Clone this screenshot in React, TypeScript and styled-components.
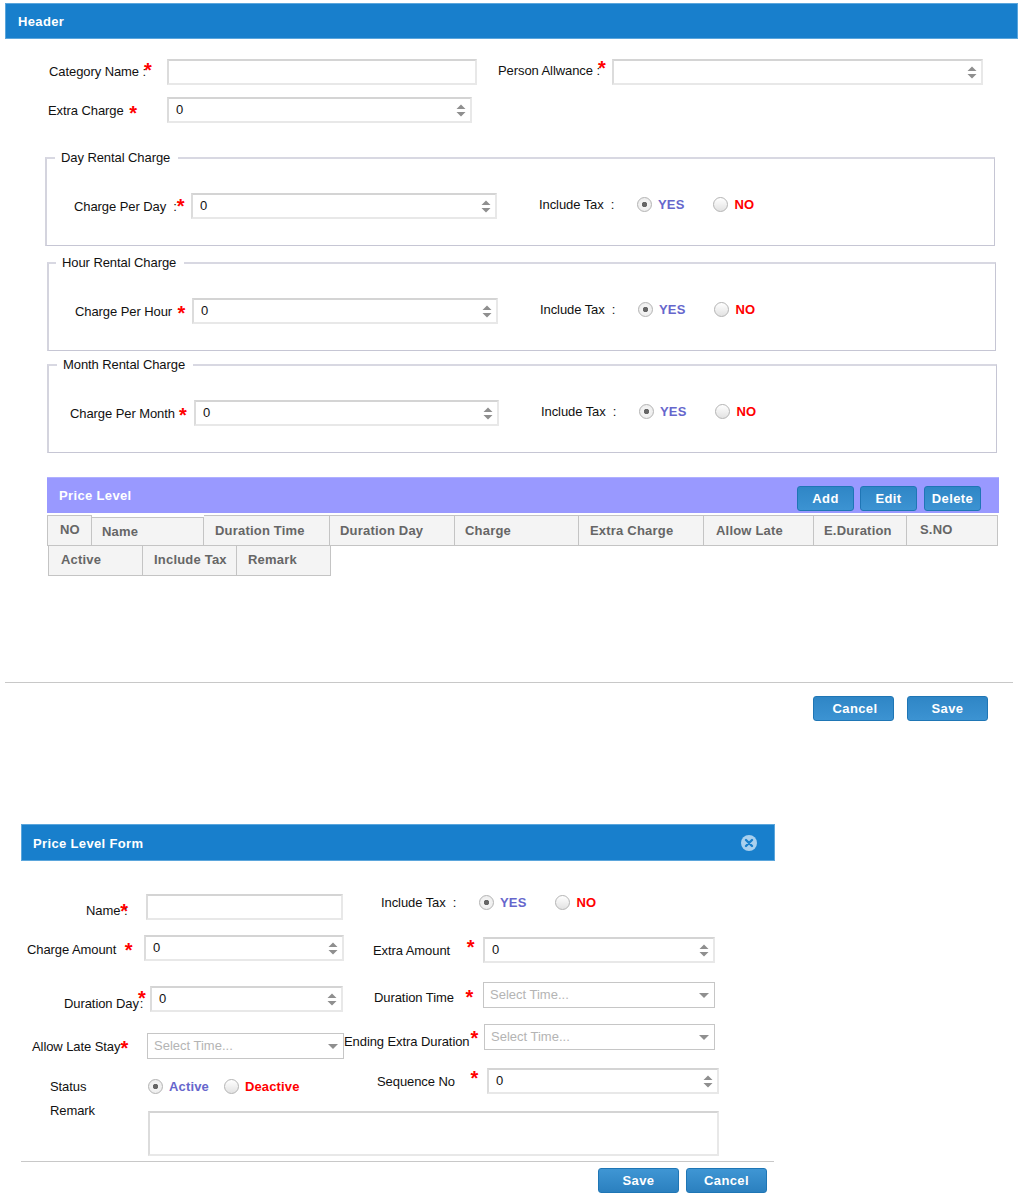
import React from "react";
import styled, { createGlobalStyle } from "styled-components";

const GlobalStyle = createGlobalStyle`
  html, body {
    margin: 0;
    padding: 0;
    background: #ffffff;
    font-family: "Liberation Sans", Arial, sans-serif;
    font-size: 13px;
    color: #111111;
  }
`;

const Page = styled.div`
  width: 1024px;
  height: 1200px;
  padding-top: 3px;
  box-sizing: border-box;
  overflow: hidden;
`;

const TopPanel = styled.section`
  margin-left: 5px;
  width: 1013px;
`;

const FormPanel = styled.section`
  margin: 103px 0 0 21px;
  width: 754px;
`;

const PanelHeader = styled.div<{ $pad: number; $h: number }>`
  height: ${(p) => p.$h}px;
  box-sizing: border-box;
  display: flex;
  align-items: center;
  justify-content: space-between;
  padding: ${(p) => p.$h - 36}px 17px 0 ${(p) => p.$pad}px;
  background: #187fcc;
  border: 1px solid #5ba6dc;
  color: #ffffff;
  font-size: 13px;
  font-weight: bold;
  letter-spacing: 0.35px;
`;

const Row = styled.div<{ $top?: number }>`
  display: flex;
  align-items: flex-start;
  margin-top: ${(p) => p.$top ?? 0}px;
`;

const Label = styled.label<{ $left?: number; $w: number; $y?: number }>`
  flex: none;
  display: block;
  box-sizing: border-box;
  margin-left: ${(p) => p.$left ?? 0}px;
  width: ${(p) => p.$w}px;
  padding-top: ${(p) => p.$y ?? 5}px;
  line-height: 16px;
  font-size: 13px;
  letter-spacing: -0.08px;
  white-space: pre;
`;

const Star = styled.span<{ $gap?: number; $up?: number; $over?: number }>`
  color: #ff0000;
  font-weight: bold;
  font-size: 20px;
  line-height: 0;
  margin-left: ${(p) => p.$gap ?? 0}px;
  margin-right: ${(p) => -(p.$over ?? 0)}px;
  vertical-align: ${(p) => p.$up ?? 0}px;
`;

const Box = styled.div<{ $w: number; $left?: number }>`
  flex: none;
  display: flex;
  align-items: center;
  box-sizing: border-box;
  margin-left: ${(p) => p.$left ?? 0}px;
  width: ${(p) => p.$w}px;
  height: 26px;
  padding: 0 4px 0 7px;
  background: #ffffff;
  border: 2px solid #e8e8e8;
  border-top-color: #d4d4d4;
  border-left-color: #dcdcdc;
`;

const SelectBox = styled(Box)`
  border: 1px solid #c6c6c6;
  padding: 0 5px 0 6px;
`;

const Field = styled.input`
  flex: 1;
  min-width: 0;
  border: 0;
  padding: 0;
  margin-top: -1px;
  outline: none;
  background: transparent;
  font: 13px "Liberation Sans", Arial, sans-serif;
  color: #111111;

  &::placeholder {
    color: #b4b4b4;
    opacity: 1;
  }
`;

const RemarkArea = styled.textarea`
  flex: none;
  box-sizing: border-box;
  width: 571px;
  height: 45px;
  margin-top: 8px;
  padding: 4px;
  resize: none;
  background: #ffffff;
  border: 2px solid #e8e8e8;
  border-top-color: #d4d4d4;
  border-left-color: #dcdcdc;
  outline: none;
`;

const Spin = () => (
  <svg width="10" height="13" viewBox="0 0 10 13" style={{ flex: "none" }}>
    <path d="M5 0.5 L9.5 5 L0.5 5 Z M0.5 8 L9.5 8 L5 12.5 Z" fill="#8f8f8f" />
  </svg>
);

const Caret = () => (
  <svg width="10" height="5" viewBox="0 0 10 5" style={{ flex: "none" }}>
    <path d="M0 0 L10 0 L5 5 Z" fill="#8f8f8f" />
  </svg>
);

const NumberField = ({ w, value = "0", left }: { w: number; value?: string; left?: number }) => (
  <Box $w={w} $left={left}>
    <Field defaultValue={value} />
    <Spin />
  </Box>
);

const TimeSelect = ({ w }: { w: number }) => (
  <SelectBox $w={w}>
    <Field placeholder="Select Time..." />
    <Caret />
  </SelectBox>
);

const Radios = styled.div<{ $gap: number; $y: number }>`
  display: flex;
  align-items: center;
  height: 16px;
  margin-top: ${(p) => p.$y}px;
  gap: ${(p) => p.$gap}px;
`;

const RadioItem = styled.div`
  display: flex;
  align-items: center;
  gap: 6px;
  font-weight: bold;
  font-size: 13px;
  letter-spacing: 0.15px;
`;

const RadioDot = styled.span<{ $on?: boolean }>`
  flex: none;
  width: 15px;
  height: 15px;
  box-sizing: border-box;
  border-radius: 50%;
  border: 1px solid #b4b4b4;
  background: ${(p) =>
    p.$on
      ? "radial-gradient(circle, #666666 0, #666666 2.4px, #f4f4f4 3px, #e8e8e8 100%)"
      : "linear-gradient(#ffffff, #e2e2e2)"};
`;

const RadioText = styled.span<{ $tone: "yes" | "no" }>`
  color: ${(p) => (p.$tone === "yes" ? "#6666cc" : "#ff0000")};
`;

const YesNo = ({
  yes = "YES",
  no = "NO",
  gap = 29,
  y = 0,
}: {
  yes?: string;
  no?: string;
  gap?: number;
  y?: number;
}) => (
  <Radios $gap={gap} $y={y}>
    <RadioItem>
      <RadioDot $on />
      <RadioText $tone="yes">{yes}</RadioText>
    </RadioItem>
    <RadioItem>
      <RadioDot />
      <RadioText $tone="no">{no}</RadioText>
    </RadioItem>
  </Radios>
);

const ChargeSet = styled.fieldset<{ $left: number; $w: number; $top: number }>`
  display: block;
  box-sizing: border-box;
  margin: ${(p) => p.$top}px 0 0 ${(p) => p.$left}px;
  width: ${(p) => p.$w}px;
  height: 96px;
  min-width: 0;
  padding: 28px 0 0 0;
  border: 1px solid #c6c6d4;
  border-top: 2px solid #d8d8e2;
  border-left: 2px solid #d4d4de;
`;

const ChargeLegend = styled.legend<{ $left: number }>`
  margin-left: ${(p) => p.$left}px;
  padding: 0 8px 0 6px;
  line-height: 15px;
  font-size: 13px;
  letter-spacing: -0.08px;
`;

const LevelBar = styled.div`
  margin: 24px 0 0 42px;
  width: 952px;
  height: 36px;
  box-sizing: border-box;
  display: flex;
  align-items: flex-start;
  justify-content: space-between;
  padding: 8px 18px 0 12px;
  background: #9999ff;
  border-top: 1px solid #b0b0ff;
  color: #ffffff;
  font-weight: bold;
  font-size: 13px;
  letter-spacing: 0.35px;
`;

const LevelTitle = styled.span`
  margin-top: 1px;
  line-height: 17px;
`;

const Buttons = styled.div`
  display: flex;
  gap: 6px;
`;

const Button = styled.button<{ $w: number; $left?: number; $nudge?: number; $flip?: boolean }>`
  width: ${(p) => p.$w}px;
  height: 25px;
  margin-left: ${(p) => p.$left ?? 0}px;
  padding: 0 0 0 ${(p) => p.$nudge ?? 0}px;
  border: 1px solid #1f76b5;
  border-radius: 3px;
  background: ${(p) =>
    p.$flip ? "linear-gradient(#3f96d4, #2b80bf)" : "linear-gradient(#2f86c6, #3c93d2)"};
  color: #ffffff;
  font: bold 13px "Liberation Sans", Arial, sans-serif;
  letter-spacing: 0.4px;
`;

const HeadRow = styled.div<{ $top: number; $left: number }>`
  display: flex;
  margin: ${(p) => p.$top}px 0 0 ${(p) => p.$left}px;
`;

const HeadCell = styled.div<{ $w: number; $pad: number; $y?: number; $drop?: number }>`
  flex: none;
  box-sizing: border-box;
  width: ${(p) => p.$w}px;
  height: ${(p) => 31 - (p.$drop ?? 0)}px;
  margin-top: ${(p) => p.$drop ?? 0}px;
  padding: ${(p) => p.$y ?? 6}px 0 0 ${(p) => p.$pad}px;
  background: #f4f4f4;
  border: 1px solid #c4c4c4;
  border-left-width: 0;
  color: #666666;
  font-weight: bold;
  font-size: 13px;
  line-height: 17px;
  letter-spacing: 0.2px;
  white-space: nowrap;

  &:first-child {
    border-left-width: 1px;
  }
`;

const Rule = styled.hr<{ $top: number; $w: number }>`
  margin: ${(p) => p.$top}px 0 0 0;
  width: ${(p) => p.$w}px;
  height: 1px;
  border: 0;
  background: #c8c8c8;
`;

const FooterBar = styled.div<{ $top: number; $right: number; $gap: number }>`
  display: flex;
  justify-content: flex-end;
  gap: ${(p) => p.$gap}px;
  margin-top: ${(p) => p.$top}px;
  padding-right: ${(p) => p.$right}px;
`;

const FormColumns = styled.div`
  display: flex;
  align-items: flex-start;
`;

const LeftColumn = styled.div`
  flex: none;
  width: 323px;
`;

const RightColumn = styled.div`
  flex: none;
  width: 431px;
`;

const CloseIcon = () => (
  <svg width="16" height="16" viewBox="0 0 16 16">
    <circle cx="8" cy="8" r="8" fill="#a9d0ee" />
    <path d="M5 5 L11 11 M11 5 L5 11" stroke="#187fcc" strokeWidth="2.4" strokeLinecap="round" />
  </svg>
);

const topCells = [
  { t: "NO", w: 45, pad: 12, y: 5 },
  { t: "Name", w: 112, pad: 10, y: 5, drop: 2 },
  { t: "Duration Time", w: 126, pad: 11 },
  { t: "Duration Day", w: 125, pad: 10 },
  { t: "Charge", w: 124, pad: 10 },
  { t: "Extra Charge", w: 125, pad: 11 },
  { t: "Allow Late", w: 110, pad: 12 },
  { t: "E.Duration", w: 93, pad: 10 },
  { t: "S.NO", w: 91, pad: 13, y: 5 },
];

const lowerCells = [
  { t: "Active", w: 95, pad: 12 },
  { t: "Include Tax", w: 94, pad: 11 },
  { t: "Remark", w: 94, pad: 11 },
];

export default function App() {
  return (
    <Page>
      <GlobalStyle />
      <TopPanel>
        <PanelHeader $pad={12} $h={36}>Header</PanelHeader>

        <Row $top={20}>
          <Label $left={44} $w={118} $y={5}>
            Category Name :<Star $gap={-2} $up={-1}>*</Star>
          </Label>
          <Box $w={310} />
          <Label $left={21} $w={114} $y={4}>
            Person Allwance :<Star $gap={-2} $up={0}>*</Star>
          </Label>
          <NumberField w={371} value="" />
        </Row>
        <Row $top={12}>
          <Label $left={43} $w={119} $y={6}>
            Extra Charge <Star $gap={2} $up={-5}>*</Star>
          </Label>
          <NumberField w={305} />
        </Row>

        <ChargeSet $left={40} $w={950} $top={27}>
          <ChargeLegend $left={8}>Day Rental Charge</ChargeLegend>
          <Row>
            <Label $left={27} $w={117} $y={6}>
              Charge Per Day  :<Star $gap={0} $up={-2}>*</Star>
            </Label>
            <NumberField w={306} />
            <Label $left={42} $w={98} $y={4}>Include Tax  :</Label>
            <YesNo y={3} />
          </Row>
        </ChargeSet>

        <ChargeSet $left={42} $w={949} $top={9}>
          <ChargeLegend $left={7}>Hour Rental Charge</ChargeLegend>
          <Row>
            <Label $left={26} $w={117} $y={6}>
              Charge Per Hour <Star $gap={2} $up={-4}>*</Star>
            </Label>
            <NumberField w={306} />
            <Label $left={42} $w={98} $y={4}>Include Tax  :</Label>
            <YesNo y={3} />
          </Row>
        </ChargeSet>

        <ChargeSet $left={42} $w={950} $top={6}>
          <ChargeLegend $left={8}>Month Rental Charge</ChargeLegend>
          <Row>
            <Label $left={21} $w={124} $y={6}>
              Charge Per Month<Star $gap={4} $up={-4}>*</Star>
            </Label>
            <NumberField w={305} />
            <Label $left={42} $w={98} $y={4}>Include Tax  :</Label>
            <YesNo y={3} />
          </Row>
        </ChargeSet>

        <LevelBar>
          <LevelTitle>Price Level</LevelTitle>
          <Buttons>
            <Button $w={57}>Add</Button>
            <Button $w={57}>Edit</Button>
            <Button $w={57} $left={1}>Delete</Button>
          </Buttons>
        </LevelBar>
        <HeadRow $top={2} $left={42}>
          {topCells.map((c) => (
            <HeadCell key={c.t} $w={c.w} $pad={c.pad} $y={c.y} $drop={c.drop}>
              {c.t}
            </HeadCell>
          ))}
        </HeadRow>
        <HeadRow $top={-1} $left={43}>
          {lowerCells.map((c) => (
            <HeadCell key={c.t} $w={c.w} $pad={c.pad} $y={5}>
              {c.t}
            </HeadCell>
          ))}
        </HeadRow>

        <Rule $top={106} $w={1008} />
        <FooterBar $top={13} $right={30} $gap={13}>
          <Button $w={81} $nudge={3}>Cancel</Button>
          <Button $w={81}>Save</Button>
        </FooterBar>
      </TopPanel>

      <FormPanel>
        <PanelHeader $pad={11} $h={37}>
          Price Level Form
          <CloseIcon />
        </PanelHeader>

        <FormColumns>
          <LeftColumn>
            <Row $top={33}>
              <Label $left={65} $w={60} $y={9}>
                Name<Star $up={-3} $over={4}>*</Star>:
              </Label>
              <Box $w={197} />
            </Row>
            <Row $top={15}>
              <Label $left={6} $w={117} $y={7}>
                Charge Amount <Star $gap={5} $up={-3}>*</Star>
              </Label>
              <NumberField w={200} />
            </Row>
            <Row $top={25}>
              <Label $left={43} $w={86} $y={10}>
                Duration Day<Star $up={3} $gap={-1} $over={6}>*</Star>:
              </Label>
              <NumberField w={193} />
            </Row>
            <Row $top={21}>
              <Label $left={11} $w={115} $y={6}>
                Allow Late Stay<Star $up={-4}>*</Star>
              </Label>
              <TimeSelect w={197} />
            </Row>
            <Row $top={19}>
              <Label $left={29} $w={98} $y={1}>Status</Label>
              <YesNo yes="Active" no="Deactive" gap={15} />
            </Row>
          </LeftColumn>

          <RightColumn>
            <Row $top={33}>
              <Label $left={37} $w={98} $y={1}>Include Tax  :</Label>
              <YesNo />
            </Row>
            <Row $top={26}>
              <Label $left={29} $w={110} $y={6}>
                Extra Amount   <Star $gap={6} $up={1}>*</Star>
              </Label>
              <NumberField w={232} />
            </Row>
            <Row $top={19}>
              <Label $left={30} $w={109} $y={8}>
                Duration Time   <Star $gap={1} $up={-2}>*</Star>
              </Label>
              <TimeSelect w={232} />
            </Row>
            <Row $top={16}>
              <Label $w={140} $y={10}>
                Ending Extra Duration<Star $gap={1} $up={1}>*</Star>
              </Label>
              <TimeSelect w={231} />
            </Row>
            <Row $top={18}>
              <Label $left={33} $w={110} $y={6}>
                Sequence No   <Star $gap={5} $up={1}>*</Star>
              </Label>
              <NumberField w={232} />
            </Row>
          </RightColumn>
        </FormColumns>

        <Row $top={8}>
          <Label $left={29} $w={98} $y={0}>Remark</Label>
          <RemarkArea />
        </Row>

        <Rule $top={5} $w={753} />
        <FooterBar $top={6} $right={8} $gap={7}>
          <Button $w={81} $flip>Save</Button>
          <Button $w={81} $flip>Cancel</Button>
        </FooterBar>
      </FormPanel>
    </Page>
  );
}
